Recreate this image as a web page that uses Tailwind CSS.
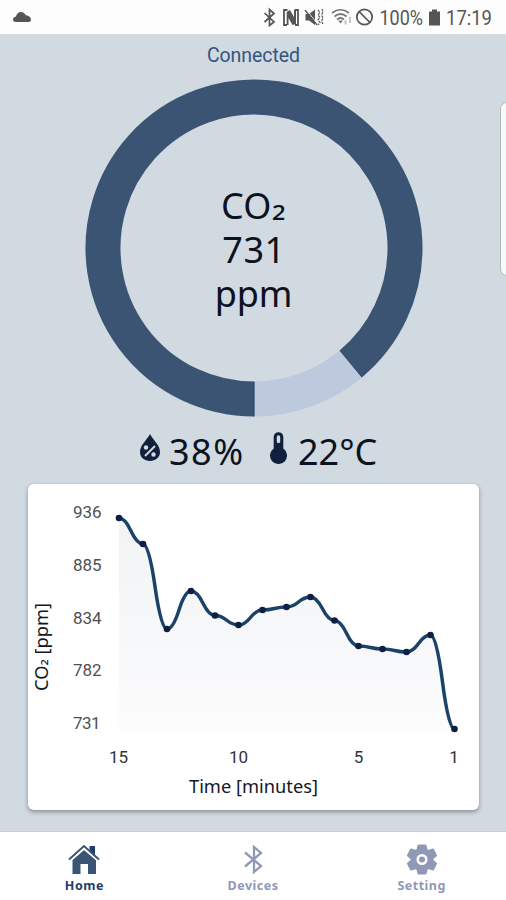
<!DOCTYPE html>
<html lang="en">
<head>
<meta charset="utf-8">
<title>CO₂ monitor</title>
<script src="https://cdn.jsdelivr.net/npm/@tailwindcss/browser@4"></script>
</head>
<body class="relative flex h-[900px] w-[506px] flex-col overflow-hidden bg-[#d1d9e1] font-['Noto_Sans',sans-serif] text-[#0b1220]">
  <header class="flex h-[34px] shrink-0 items-center justify-between bg-[#fdfdfd] pr-[10px] pl-[13px] font-[Roboto,sans-serif] text-[#555]">
    <svg class="h-3 w-[18px]" viewBox="0 0 18 12" fill="#555"><path d="M3 11Q0 11 0 8.500Q0 6 3 5.500Q4 1 8 1Q11 1 12.500 4Q18 5 18 9Q18 11 15.500 11Z"/></svg>
    <svg class="h-[34px] w-[234px]" viewBox="262 0 234 34" fill="none" stroke="#555" stroke-width="1.700">
      <path d="M264.500 13L274 22L269.500 25.500V9.500L274 13.500L264.500 22"/>
      <path d="M287.500 10H284V25H287M294.500 10H298V25H295" stroke-width="1.800"/><path d="M286.700 12L290 10L294 17V10H296V24L292.500 25L288.500 18V25H286.700Z" fill="#555" stroke="none"/>
      <path d="M305.500 14H309L315 9.500V25L309 20.500H305.500Z" fill="#555" stroke="none"/><path d="M306 9.500L317.500 24" stroke="#fdfdfd" stroke-width="1"/><path d="M305 10L317 25" stroke-width="1.300"/>
      <path d="M318 10L320 12.500L318 15L320 17.500L318 20L320 22.500L318 25M322 9L323 12L321.500 15L323 18L321.500 21L323 24" stroke-width="1.200" stroke-dasharray="2.500 1"/>
      <path d="M332 13Q340.500 6.500 349 13M334.500 16.500Q340.500 11.500 346.500 16.500M337 19.500Q340.500 16.500 344 19.500" stroke="#777"/><path d="M338 20.500L340.500 23.500L343 20.500Z" fill="#777" stroke="none"/>
      <path d="M345.500 20V24.500M350 17V23" stroke="#c4c4c4" stroke-width="2"/>
      <circle cx="364.500" cy="17" r="7.700"/><path d="M359 11.500L370 22.500"/>
      <path d="M432 9.500H437V11.500H440V25.500H429V11.500H432Z" fill="#555" stroke="none"/>
      <g fill="#555" stroke="none" font-family="Roboto, sans-serif" font-size="20"><text x="379.500" y="25" textLength="43.500" lengthAdjust="spacingAndGlyphs">100%</text><text x="446" y="25" textLength="46" lengthAdjust="spacingAndGlyphs">17:19</text></g>
    </svg>
  </header>

  <main class="flex grow flex-col items-center">
    <p class="mt-[10px] h-6 pl-px text-center font-[Roboto,sans-serif] text-[19.500px] leading-6 -tracking-[0.05px] text-[#35557f]">Connected</p>
    <section class="mt-[11px] ml-px grid h-[338px] w-[338px] place-items-center">
      <svg class="col-start-1 row-start-1 h-[338px] w-[338px]" viewBox="0 0 338 338" fill="none" stroke-width="35">
        <path d="M265.450 285.180A151 151 0 1 0 169 320" stroke="#3b5473"/>
        <path d="M265.450 285.180A151 151 0 0 1 169 320" stroke="#bdc9dc"/>
        <path d="M169 302.500V337.500" stroke="#123e68" stroke-width="1"/>
      </svg>
      <div class="col-start-1 row-start-1 mt-[3px] text-center text-[36px] leading-[44px]">
        <div>CO<span class="relative -top-[3px] ml-px inline-block origin-left scale-x-110 pr-[1px] leading-none">₂</span></div>
        <div class="-mr-px tracking-[0.5px]">731</div>
        <div class="tracking-[-0.2px]">ppm</div>
      </div>
    </section>
    <section class="mt-[11px] flex h-12 w-full items-center pl-[140px] text-[36px] leading-[48px]">
      <svg class="mr-[9px] h-[28px] w-[20px] -translate-y-1" viewBox="0 0 20 28"><path d="M10 0C7 6 0 11 0 18C0 23.500 4.500 27 10 27S20 23.500 20 18C20 11 13 6 10 0Z" fill="#12213b"/><path d="M5 22L15 12" stroke="#d1d9e1" stroke-width="2"/><circle cx="6" cy="13.500" r="2.200" fill="#d1d9e1"/><circle cx="13.500" cy="20.500" r="2.200" fill="#d1d9e1"/></svg>
      <span class="w-[101px] tracking-[1.500px]">38%</span>
      <svg class="mr-[11px] h-[32px] w-[17px] -translate-y-1" viewBox="0 0 17 32"><path d="M3.700 5A4.800 4.800 0 0 1 13.300 5V16.500A8.500 8.500 0 1 1 3.700 16.500Z" fill="#12213b"/><path d="M8.500 5V9.500" stroke="#d1d9e1" stroke-width="3.400" stroke-linecap="round"/></svg>
      <span>22°C</span>
    </section>
    <section class="mt-[8px] h-[326px] w-[451px] rounded-[6px] bg-white shadow-[0_2px_4px_rgba(40,50,60,0.45)]">
      <svg class="h-[326px] w-[451px]" viewBox="28 484 451 326" font-family="Noto Sans, sans-serif">
        <defs><linearGradient id="fade" x1="0" y1="518" x2="0" y2="731" gradientUnits="userSpaceOnUse"><stop stop-color="#f1f3f5"/><stop offset="1" stop-color="#fcfcfd"/></linearGradient></defs>
        <path id="area" fill="url(#fade)"/>
        <path id="line" fill="none" stroke="#1b4369" stroke-width="3.500"/>
        <g id="dots" fill="#0e1f42"></g>
        <g font-family="Roboto, sans-serif" font-size="17" fill="#505050">
          <text x="73" y="518" textLength="28.500">936</text><text x="73" y="571" textLength="28.500">885</text><text x="73" y="623.500" textLength="28.500">834</text><text x="73" y="676" textLength="28.500">782</text><text x="73" y="728.500" textLength="27.500">731</text>
        </g>
        <g font-family="Roboto, sans-serif" font-size="17" fill="#333" text-anchor="middle">
          <text x="118.500" y="763">15</text><text x="238.500" y="763">10</text><text x="358.500" y="763">5</text><text x="454" y="763">1</text>
        </g>
        <text x="189" y="793" font-size="18" textLength="129" lengthAdjust="spacingAndGlyphs" fill="#111827">Time [minutes]</text>
        <text transform="translate(48 691) rotate(-90)" font-size="18" textLength="88" lengthAdjust="spacingAndGlyphs" fill="#111827">CO<tspan dy="-2">₂</tspan><tspan dy="2"> [ppm]</tspan></text>
      </svg>
    </section>
  </main>

  <nav class="grid h-[69px] shrink-0 grid-cols-3 border-t border-[#c8ced5] bg-white text-[12.500px] leading-4 font-bold tracking-[0.500px]">
    <div class="flex flex-col items-center pt-3 text-[#213d6b]">
      <svg class="h-[31px] w-8" viewBox="0 0 32 31" fill="#3b5473"><path d="M4.500 16L16 6L28 16V30H20V20H12.500V30H4.500Z"/><path d="M21.500 2H27V13L21.500 8Z" fill="#213d6b"/><path d="M3 16L16 4.800L29 16" fill="none" stroke="#fff" stroke-width="1.500"/><path d="M1 15.500L16 2L31 15.500" fill="none" stroke="#3b5473" stroke-width="2"/></svg>
      <span class="mt-[3px]">Home</span>
    </div>
    <div class="flex flex-col items-center pt-3 text-[#8f98b5]">
      <svg class="h-[31px] w-5" viewBox="0 0 20 31" fill="none" stroke="#8f98b5" stroke-width="2.300"><path d="M2 8.500L18 22L11 28V3L18 9L2 22.500"/></svg>
      <span class="mt-[3px]">Devices</span>
    </div>
    <div class="flex flex-col items-center pt-3 text-[#8f98b5]">
      <svg class="h-[31px] w-[30px]" viewBox="0 0 30 31" fill="#8f98b5" stroke="#8f98b5" stroke-width="2" stroke-linejoin="round"><path d="M11.500 1.500H18.500L19.500 6L21.500 7L26 5.500L29 11.500L25.500 14.500V16.500L29 19.500L26 25.500L21.500 24L19.500 25.500L18.500 29.500H11.500L10.500 25.500L8.500 24L4 25.500L1 19.500L4.500 16.500V14.500L1 11.500L4 5.500L8.500 7L10.500 6Z"/><circle cx="15" cy="15.500" r="4.300" stroke="#fff" stroke-width="2.500"/></svg>
      <span class="mt-[3px]">Setting</span>
    </div>
  </nav>
  <div class="absolute top-[102px] right-[-8px] h-[174px] w-[14px] rounded-[7px] border border-[#b5babd] bg-[#f8faf9]"></div>
  <script>
    const points = [[119,518],[143,544],[167,629],[191,591],[215,615.5],[238.5,625],[262.5,610],[286.5,607],[310.5,597],[334.5,620.5],[358.5,646],[382.5,649],[406.5,652],[430.5,635],[454.5,729]];
    let d = 'M119 518';
    for (let i = 0; i < points.length - 1; i++) {
      const [x, y] = points[i], [x2, y2] = points[i + 1], mx = (x + x2) / 2, my = (y + y2) / 2;
      d += `Q${(x + mx) / 2} ${y} ${mx} ${my}Q${(x2 + mx) / 2} ${y2} ${x2} ${y2}`;
    }
    document.getElementById('line').setAttribute('d', d);
    document.getElementById('area').setAttribute('d', d + 'L454.5 731H119Z');
    document.getElementById('dots').innerHTML = points.map(([x, y]) => `<circle cx="${x}" cy="${y}" r="3.300"/>`).join('');
  </script>
</body>
</html>
